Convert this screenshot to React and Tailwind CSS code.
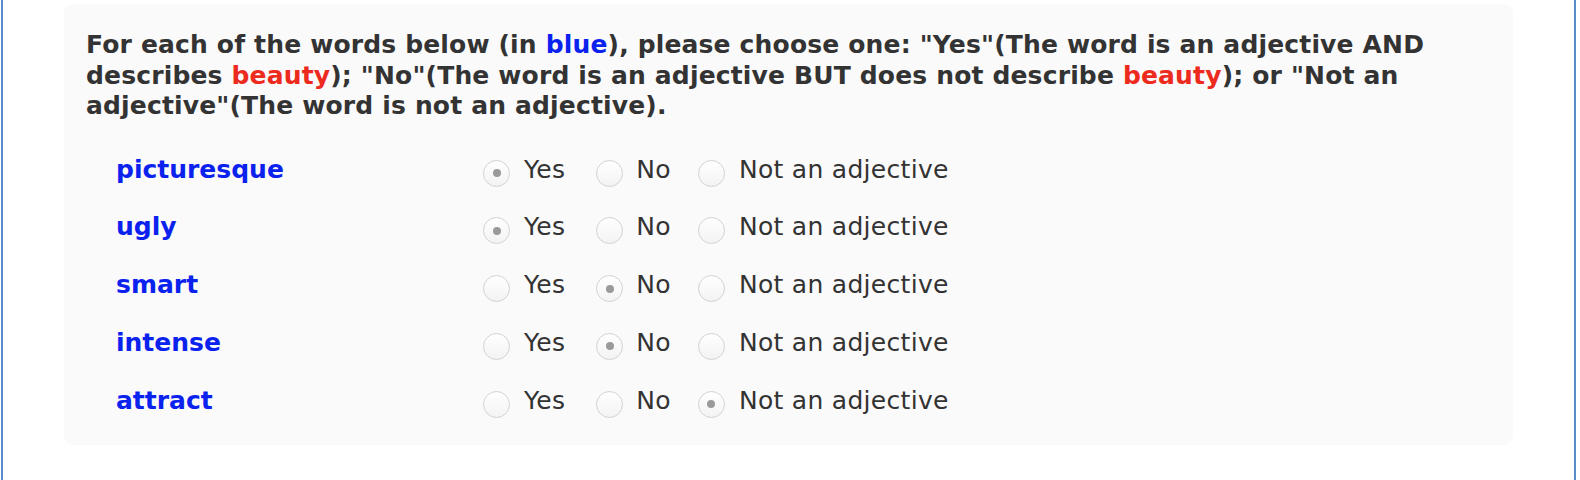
import { useState } from 'react';

const words = [
    { word: 'picturesque', value: 'yes' },
    { word: 'ugly', value: 'yes' },
    { word: 'smart', value: 'no' },
    { word: 'intense', value: 'no' },
    { word: 'attract', value: 'not' },
];

const options = [
    { key: 'yes', label: 'Yes', wrap: 'mr-[31px]', text: 'ml-[14px]' },
    { key: 'no', label: 'No', wrap: 'mr-[27px]', text: 'ml-[13px]' },
    { key: 'not', label: 'Not an adjective', wrap: '', text: 'ml-[14px]' },
];

const Radio = ({ checked, onClick }) => (
    <button
        type="button"
        onClick={onClick}
        className="w-[27px] h-[27px] rounded-full border border-[#d2d2d2] bg-gradient-to-b from-white to-[#f3f3f3] flex items-center justify-center mt-[18px] shrink-0"
    >
        {checked && <span className="w-[8px] h-[8px] rounded-full bg-[#9a9a9a]" />}
    </button>
);

const App = () => {
    const [answers, setAnswers] = useState(words.map((w) => w.value));

    const choose = (i, key) => {
        const next = [...answers];
        next[i] = key;
        setAnswers(next);
    };

    return (
        <div className="h-[480px] bg-white overflow-hidden" style={{ fontFamily: '"DejaVu Sans", Verdana, sans-serif' }}>
            <div className="ml-[1px] w-[1575px] h-[500px] border-x-2 border-[#5b8cca] px-[61px] pt-[4px]">
                <div className="bg-[#fafafa] rounded-[9px] pl-[22px] pr-[22px] pt-[26px] pb-[15px]">
                    <p className="text-[25px] leading-[30.5px] font-bold tracking-[0.16px] text-[#333333]">
                        For each of the words below (in <span className="text-[#0b22ee]">blue</span>), please choose one: "Yes"(The word is an adjective AND describes <span className="text-[#ec2a1d]">beauty</span>); "No"(The word is an adjective BUT does not describe <span className="text-[#ec2a1d]">beauty</span>); or "Not an adjective"(The word is not an adjective).
                    </p>
                    <div className="mt-[20px]">
                        {words.map((w, i) => (
                            <div key={w.word} className="flex items-start h-[57.75px] pl-[30px]">
                                <div className="w-[367px] text-[25px] leading-[30px] font-bold text-[#0b22ee] mt-[13px]">
                                    {w.word}
                                </div>
                                <div className="flex items-start">
                                    {options.map((o) => (
                                        <label key={o.key} className={`flex items-start ${o.wrap}`}>
                                            <Radio checked={answers[i] === o.key} onClick={() => choose(i, o.key)} />
                                            <span className={`${o.text} text-[25px] leading-[30px] tracking-[0.3px] text-[#333333] mt-[13px]`}>{o.label}</span>
                                        </label>
                                    ))}
                                </div>
                            </div>
                        ))}
                    </div>
                </div>
            </div>
        </div>
    );
};

export default App;
